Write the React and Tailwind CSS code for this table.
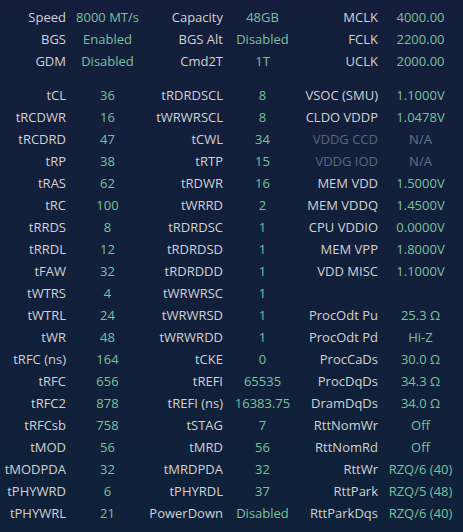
const top = [
  ["Speed", "8000 MT/s", "Capacity", "48GB", "MCLK", "4000.00"],
  ["BGS", "Enabled", "BGS Alt", "Disabled", "FCLK", "2200.00"],
  ["GDM", "Disabled", "Cmd2T", "1T", "UCLK", "2000.00"],
];

const timings = [
  ["tCL", "36", "tRDRDSCL", "8", "VSOC (SMU)", "1.1000V"],
  ["tRCDWR", "16", "tWRWRSCL", "8", "CLDO VDDP", "1.0478V"],
  ["tRCDRD", "47", "tCWL", "34", "VDDG CCD", "N/A", true],
  ["tRP", "38", "tRTP", "15", "VDDG IOD", "N/A", true],
  ["tRAS", "62", "tRDWR", "16", "MEM VDD", "1.5000V"],
  ["tRC", "100", "tWRRD", "2", "MEM VDDQ", "1.4500V"],
  ["tRRDS", "8", "tRDRDSC", "1", "CPU VDDIO", "0.0000V"],
  ["tRRDL", "12", "tRDRDSD", "1", "MEM VPP", "1.8000V"],
  ["tFAW", "32", "tRDRDDD", "1", "VDD MISC", "1.1000V"],
  ["tWTRS", "4", "tWRWRSC", "1", "", ""],
  ["tWTRL", "24", "tWRWRSD", "1", "ProcOdt Pu", "25.3 Ω"],
  ["tWR", "48", "tWRWRDD", "1", "ProcOdt Pd", "Hi-Z"],
  ["tRFC (ns)", "164", "tCKE", "0", "ProcCaDs", "30.0 Ω"],
  ["tRFC", "656", "tREFI", "65535", "ProcDqDs", "34.3 Ω"],
  ["tRFC2", "878", "tREFI (ns)", "16383.75", "DramDqDs", "34.0 Ω"],
  ["tRFCsb", "758", "tSTAG", "7", "RttNomWr", "Off"],
  ["tMOD", "56", "tMRD", "56", "RttNomRd", "Off"],
  ["tMODPDA", "32", "tMRDPDA", "32", "RttWr", "RZQ/6 (40)"],
  ["tPHYWRD", "6", "tPHYRDL", "37", "RttPark", "RZQ/5 (48)"],
  ["tPHYWRL", "21", "PowerDown", "Disabled", "RttParkDqs", "RZQ/6 (40)"],
];

function Row({ row }) {
  const dim = row[6];
  return (
    <div className="grid grid-cols-[66px_83px_74px_79px_76px_85px] h-[22px] items-center whitespace-nowrap">
      <div className="text-right text-[#d2d2d2]">{row[0]}</div>
      <div className="text-center text-[#78c29b]">{row[1]}</div>
      <div className="text-right text-[#d2d2d2]">{row[2]}</div>
      <div className="text-center text-[#78c29b]">{row[3]}</div>
      <div className={`text-right ${dim ? "text-[#5a6977]" : "text-[#d2d2d2]"}`}>{row[4]}</div>
      <div className={`text-center ${dim ? "text-[#66747f]" : "text-[#78c29b]"}`}>{row[5]}</div>
    </div>
  );
}

export default function App() {
  return (
    <div className="w-[463px] h-[532px] overflow-hidden bg-gradient-to-b from-[#141e3c] to-[#0f2139] pt-[7px] font-['Open_Sans',sans-serif] text-[13px]">
      <div>
        {top.map((r) => (
          <Row key={r[0]} row={r} />
        ))}
      </div>
      <div className="mt-3">
        {timings.map((r) => (
          <Row key={r[0]} row={r} />
        ))}
      </div>
    </div>
  );
}
